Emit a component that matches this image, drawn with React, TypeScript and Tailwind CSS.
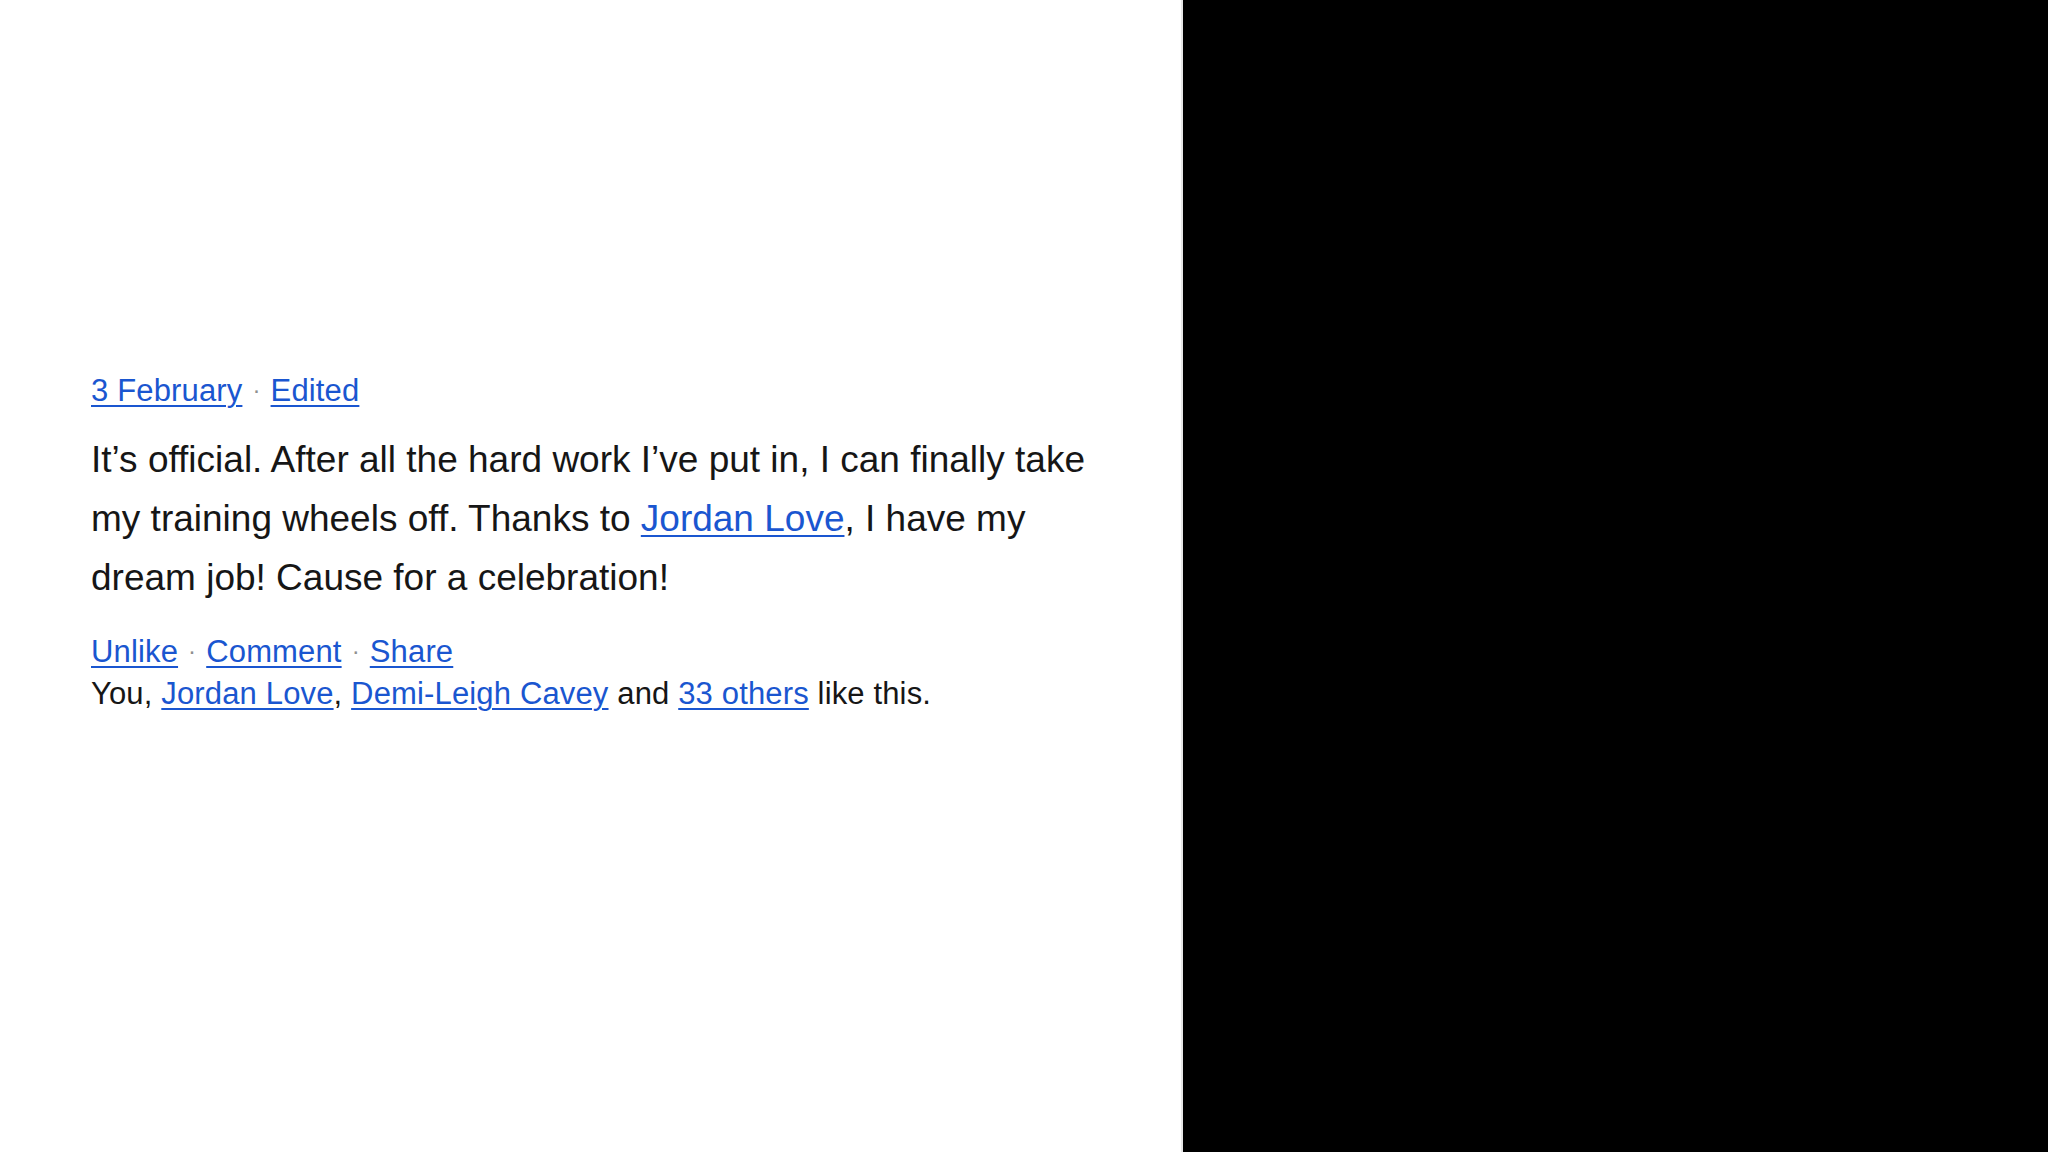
const link = "text-[#1a56d0] underline decoration-[2px] underline-offset-[4px]";

function Dot() {
  return <span className="mx-[10px] text-[#8f8f8f] text-[24px] leading-none align-[3px]">·</span>;
}

export default function App() {
  return (
    <div className="flex h-[1152px] w-[2048px] bg-black font-['Liberation_Sans',Arial,sans-serif]">
      <div className="w-[1183px] shrink-0 border-r-2 border-[#e6e6e6] bg-white pl-[91px] pt-[370px] text-[#161616]">
        <div className="text-[31px] leading-[42px] tracking-[0.15px]">
          <a className={link}>3 February</a>
          <Dot />
          <a className={link}>Edited</a>
        </div>
        <p className="mt-[18px] w-[1030px] text-[37px] leading-[59px]">
          It’s official. After all the hard work I’ve put in, I can finally take my training wheels off. Thanks to{" "}
          <a className={link}>Jordan Love</a>, I have my dream job! Cause for a celebration!
        </p>
        <div className="mt-[24px] text-[31px] leading-[42px] tracking-[0.15px]">
          <div>
            <a className={link}>Unlike</a>
            <Dot />
            <a className={link}>Comment</a>
            <Dot />
            <a className={link}>Share</a>
          </div>
          <div>
            You, <a className={link}>Jordan Love</a>, <a className={link}>Demi-Leigh Cavey</a> and{" "}
            <a className={link}>33 others</a> like this.
          </div>
        </div>
      </div>
      <div className="flex-1" />
    </div>
  );
}
